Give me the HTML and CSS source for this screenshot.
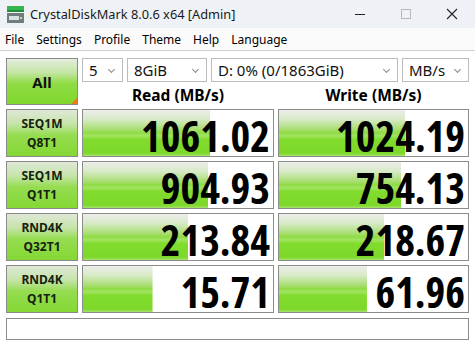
FILE: index.html
```html
<!DOCTYPE html>
<html lang="en">
  <head>
    <meta charset="UTF-8" />
    <title>CrystalDiskMark 8.0.6 x64 [Admin]</title>
    <link rel="stylesheet" href="styles.css">
  </head>
  <body>
    <div class="window">
      <div class="titlebar">
        <svg class="app-icon" width="18" height="17" viewBox="0 0 18 17">
          <rect x="0" y="0" width="17" height="6" fill="#35b44f" />
          <rect x="0" y="4" width="17" height="2" fill="#1f8f3a" />
          <rect x="0" y="7" width="17" height="10" fill="#6f7d7d" />
          <rect x="2" y="10" width="10" height="4" fill="#d9e1e1" />
          <rect x="13" y="11" width="2" height="2" fill="#c8d0d0" />
        </svg>
        <span class="title">CrystalDiskMark 8.0.6 x64 [Admin]</span>
        <div class="caption-buttons">
          <svg width="46" height="28" viewBox="0 0 46 28">
            <line x1="18" y1="14.5" x2="28" y2="14.5" stroke="#222" stroke-width="1" />
          </svg>
          <svg width="46" height="28" viewBox="0 0 46 28">
            <rect x="18.5" y="9.5" width="9" height="9" fill="none" stroke="#b8b8b8" stroke-width="1" />
          </svg>
          <svg width="46" height="28" viewBox="0 0 46 28">
            <path d="M18 9 L28 19 M28 9 L18 19" stroke="#222" stroke-width="1.1" />
          </svg>
        </div>
      </div>

      <div class="menubar">
        <span>File</span>
        <span>Settings</span>
        <span>Profile</span>
        <span>Theme</span>
        <span>Help</span>
        <span>Language</span>
      </div>

      <div class="bench">
        <button class="all-btn">All</button>

        <div class="options">
          <div class="combo combo-count">5</div>
          <div class="combo combo-size">8GiB</div>
          <div class="combo combo-drive">D: 0% (0/1863GiB)</div>
          <div class="combo combo-unit">MB/s</div>
        </div>

        <div class="col-head">Read (MB/s)</div>
        <div class="col-head">Write (MB/s)</div>

        <!-- bar width = log10(value * 10) / 6 -->
        <div class="test-btn"><span>SEQ1M</span><span>Q8T1</span></div>
        <div class="score" style="--w: 67.10%"><span>1061.02</span></div>
        <div class="score" style="--w: 66.84%"><span>1024.19</span></div>

        <div class="test-btn"><span>SEQ1M</span><span>Q1T1</span></div>
        <div class="score" style="--w: 65.94%"><span>904.93</span></div>
        <div class="score" style="--w: 64.62%"><span>754.13</span></div>

        <div class="test-btn"><span>RND4K</span><span>Q32T1</span></div>
        <div class="score" style="--w: 55.50%"><span>213.84</span></div>
        <div class="score" style="--w: 55.66%"><span>218.67</span></div>

        <div class="test-btn"><span>RND4K</span><span>Q1T1</span></div>
        <div class="score" style="--w: 36.60%"><span>15.71</span></div>
        <div class="score" style="--w: 46.54%"><span>61.96</span></div>

        <div class="status"></div>
      </div>
    </div>
  </body>
</html>
```

FILE: styles.css
```css
body {
  margin: 0;
  background: #ffffff;
  font-family: "Noto Sans", "Open Sans", sans-serif;
  color: #000;
}
.window {
  width: 475px;
  height: 346px;
  overflow: hidden;
}
.titlebar {
  height: 28px;
  display: flex;
  align-items: center;
  background: #eef2f7;
}
.app-icon {
  margin-left: 7px;
  margin-top: 1px;
}
.title {
  margin-left: 5px;
  font-size: 12.8px;
  color: #1a1a1a;
}
.caption-buttons {
  margin-left: auto;
  display: flex;
}
.caption-buttons svg {
  display: block;
}
.menubar {
  height: 22px;
  display: flex;
  align-items: center;
  gap: 12px;
  padding-left: 5px;
  font-size: 12px;
  border-bottom: 1px solid #cfcfcf;
  background: #fbfbfb;
}
.bench {
  display: grid;
  grid-template-columns: 72px 192px 191px;
  grid-template-rows: 24px 19px repeat(4, 48px) 23px;
  gap: 4px;
  padding: 7px 6px 0;
}
.all-btn {
  grid-row: span 2;
  position: relative;
  margin: 0;
  padding: 0;
  border: 1px solid #8a8a8a;
  background: linear-gradient(to bottom, #e4ecdf 0%, #c4e6a4 30%, #8fdc44 55%, #80d82c 100%);
  font-family: "Noto Sans", sans-serif;
  font-weight: 700;
  font-size: 15px;
  color: #111;
}
.all-btn::after {
  content: "";
  position: absolute;
  right: 0;
  bottom: 0;
  border-style: solid;
  border-width: 0 0 6px 6px;
  border-color: transparent transparent #ee7a1c transparent;
}
.options {
  grid-column: span 2;
  display: flex;
  gap: 4px;
}
.combo {
  position: relative;
  box-sizing: border-box;
  height: 24px;
  border: 1px solid #bcbcbc;
  background: #fff;
  font-size: 15px;
  line-height: 22px;
  padding-left: 6px;
  color: #111;
}
.combo::after {
  content: "";
  position: absolute;
  right: 8px;
  top: 8px;
  width: 4px;
  height: 4px;
  border-right: 1px solid #8a8a8a;
  border-bottom: 1px solid #8a8a8a;
  transform: rotate(45deg);
}
.combo-count { width: 41px; }
.combo-size { width: 80px; }
.combo-drive { width: 187px; }
.combo-unit { width: 67px; }
.col-head {
  text-align: center;
  font-weight: 700;
  font-size: 15.5px;
  line-height: 19px;
}
.test-btn {
  display: flex;
  flex-direction: column;
  align-items: center;
  justify-content: center;
  border: 1px solid #8a8a8a;
  background: linear-gradient(to bottom, #dfe8d8 0%, #c6e4aa 30%, #95dc50 55%, #84d834 100%);
  font-weight: 700;
  font-size: 12px;
  line-height: 19px;
  color: #16220f;
}
.score {
  display: flex;
  align-items: center;
  justify-content: flex-end;
  padding-right: 3px;
  border: 1px solid #8c8c8c;
  background: linear-gradient(to bottom, #eceee9 0%, #d8eac8 20%, #a8de72 42%, #8fdc42 50%, #a2e463 56%, #82dc2e 64%, #7ed82a 94%, #a6e26c 100%) no-repeat;
  background-size: var(--w) 100%;
  background-color: #fff;
}
.score span {
  font-family: "Open Sans", sans-serif;
  font-weight: 700;
  font-stretch: 75%;
  font-size: 42px;
  line-height: 1;
  margin-top: 6px;
}
.status {
  grid-column: 1 / -1;
  margin-top: 1px;
  border: 1px solid #8c8c8c;
  background: #fff;
}
```
